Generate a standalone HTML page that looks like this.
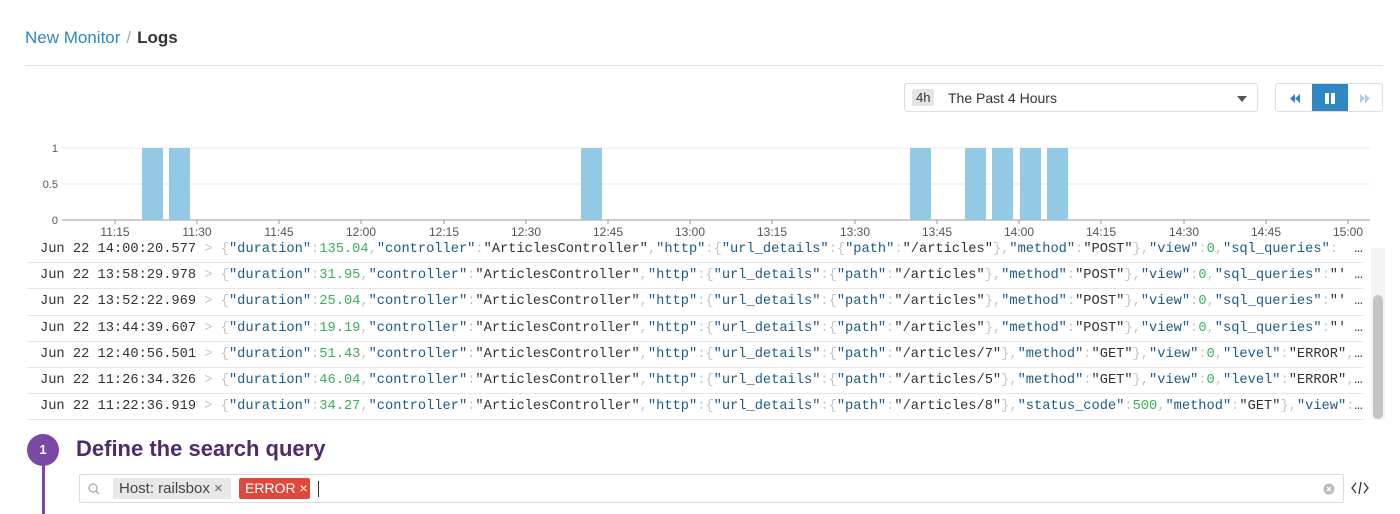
<!DOCTYPE html>
<html><head><meta charset="utf-8"><style>
*{margin:0;padding:0;box-sizing:border-box}
body{width:1400px;height:508px;overflow:hidden;background:#fff;font-family:"Liberation Sans",sans-serif;position:relative}
.bc{position:absolute;left:25px;top:28px;font-size:17px;color:#333}
.bc a{color:#2f87c4;text-decoration:none}
.bc .sl{color:#aaa;margin:0 6px}
.bc b{color:#333}
.hr{position:absolute;left:25px;right:17px;top:65px;border-top:1px solid #e3e3e3}
.sel{position:absolute;left:904px;top:83px;width:354px;height:29px;border:1px solid #ddd;border-radius:3px;font-size:14px;color:#333}
.sel .t{position:absolute;left:7px;top:5px;background:#e4e4e4;padding:1px 4px;border-radius:2px;font-size:13px}
.sel .l{position:absolute;left:43px;top:6px}
.sel .c{position:absolute;right:10px;top:12px;border-left:5px solid transparent;border-right:5px solid transparent;border-top:6px solid #555}
.btns{position:absolute;left:1275px;top:83px;width:108px;height:29px;border:1px solid #ddd;border-radius:3px;overflow:hidden}
.btns div{position:absolute;top:0;height:29px;width:36px}
.log{position:absolute;left:27px;top:240px;width:1340px;height:180px;overflow:hidden;font-family:"Liberation Mono",monospace;font-size:13.7px}
.in{margin-top:-3px}
.row{height:26.2px;line-height:26px;border-bottom:1px solid #e6e6e6;padding-left:13px;white-space:nowrap;overflow:hidden;text-overflow:ellipsis;width:1336px;color:#333}
.k{color:#1e5b86}.n{color:#3bb05a}.p{color:#c4c4c4}.s{color:#333}
.sb{position:absolute;left:1373px;top:295px;width:10px;height:124px;background:#c4c4c4;border-radius:5px}
.sbt{position:absolute;left:1371px;top:248px;width:14px;height:172px;background:#f4f4f4}
.step{position:absolute;left:27px;top:434px;width:32px;height:32px;border-radius:50%;background:#7a49a5;color:#fff;font-weight:bold;font-size:13px;text-align:center;line-height:32px}
.vl{position:absolute;left:42px;top:464px;width:3px;height:50px;background:#7a49a5}
.h{position:absolute;left:76px;top:436px;font-size:22px;font-weight:bold;color:#4e2a6e}
.q{position:absolute;left:79px;top:474px;width:1265px;height:29px;border:1px solid #ddd;border-radius:2px;font-size:15px}
.tag{position:absolute;top:3px;height:21px;line-height:21px;padding:0 6px;border-radius:2px;white-space:nowrap}
</style></head><body>
<div class="bc"><a>New Monitor</a><span class="sl">/</span><b>Logs</b></div>
<div class="hr"></div>
<div class="sel"><span class="t">4h</span><span class="l">The Past 4 Hours</span><span class="c"></span></div>
<div class="btns">
<div style="left:0"><svg width="36" height="29"><path d="M19 10l-5 4.5 5 4.5zM24 10l-5 4.5 5 4.5z" fill="#2f87c4"/></svg></div>
<div style="left:36px;background:#2f87c4"><svg width="36" height="29"><rect x="13" y="9" width="4" height="11" fill="#fff"/><rect x="19" y="9" width="4" height="11" fill="#fff"/></svg></div>
<div style="left:72px"><svg width="36" height="29"><path d="M12 10l5 4.5-5 4.5zM17 10l5 4.5-5 4.5z" fill="#a9d0ec"/></svg></div>
</div>
<div class="sbt"></div><div class="sb"></div>
<div class="log"><div class="in">
<div class="row">Jun 22 14:00:20.577 <span class="p">&gt; {</span><span class="k">"duration"</span><span class="p">:</span><span class="n">135.04</span><span class="p">,</span><span class="k">"controller"</span><span class="p">:</span>"ArticlesController"<span class="p">,</span><span class="k">"http"</span><span class="p">:{</span><span class="k">"url_details"</span><span class="p">:{</span><span class="k">"path"</span><span class="p">:</span>"/articles"<span class="p">},</span><span class="k">"method"</span><span class="p">:</span>"POST"<span class="p">},</span><span class="k">"view"</span><span class="p">:</span><span class="n">0</span><span class="p">,</span><span class="k">"sql_queries"</span><span class="p">:</span> &nbsp; &nbsp;…</div>
<div class="row">Jun 22 13:58:29.978 <span class="p">&gt; {</span><span class="k">"duration"</span><span class="p">:</span><span class="n">31.95</span><span class="p">,</span><span class="k">"controller"</span><span class="p">:</span>"ArticlesController"<span class="p">,</span><span class="k">"http"</span><span class="p">:{</span><span class="k">"url_details"</span><span class="p">:{</span><span class="k">"path"</span><span class="p">:</span>"/articles"<span class="p">},</span><span class="k">"method"</span><span class="p">:</span>"POST"<span class="p">},</span><span class="k">"view"</span><span class="p">:</span><span class="n">0</span><span class="p">,</span><span class="k">"sql_queries"</span><span class="p">:</span>"' (…</div>
<div class="row">Jun 22 13:52:22.969 <span class="p">&gt; {</span><span class="k">"duration"</span><span class="p">:</span><span class="n">25.04</span><span class="p">,</span><span class="k">"controller"</span><span class="p">:</span>"ArticlesController"<span class="p">,</span><span class="k">"http"</span><span class="p">:{</span><span class="k">"url_details"</span><span class="p">:{</span><span class="k">"path"</span><span class="p">:</span>"/articles"<span class="p">},</span><span class="k">"method"</span><span class="p">:</span>"POST"<span class="p">},</span><span class="k">"view"</span><span class="p">:</span><span class="n">0</span><span class="p">,</span><span class="k">"sql_queries"</span><span class="p">:</span>"' (…</div>
<div class="row">Jun 22 13:44:39.607 <span class="p">&gt; {</span><span class="k">"duration"</span><span class="p">:</span><span class="n">19.19</span><span class="p">,</span><span class="k">"controller"</span><span class="p">:</span>"ArticlesController"<span class="p">,</span><span class="k">"http"</span><span class="p">:{</span><span class="k">"url_details"</span><span class="p">:{</span><span class="k">"path"</span><span class="p">:</span>"/articles"<span class="p">},</span><span class="k">"method"</span><span class="p">:</span>"POST"<span class="p">},</span><span class="k">"view"</span><span class="p">:</span><span class="n">0</span><span class="p">,</span><span class="k">"sql_queries"</span><span class="p">:</span>"' (…</div>
<div class="row">Jun 22 12:40:56.501 <span class="p">&gt; {</span><span class="k">"duration"</span><span class="p">:</span><span class="n">51.43</span><span class="p">,</span><span class="k">"controller"</span><span class="p">:</span>"ArticlesController"<span class="p">,</span><span class="k">"http"</span><span class="p">:{</span><span class="k">"url_details"</span><span class="p">:{</span><span class="k">"path"</span><span class="p">:</span>"/articles/7"<span class="p">},</span><span class="k">"method"</span><span class="p">:</span>"GET"<span class="p">},</span><span class="k">"view"</span><span class="p">:</span><span class="n">0</span><span class="p">,</span><span class="k">"level"</span><span class="p">:</span>"ERROR"<span class="p">,</span>"…</div>
<div class="row">Jun 22 11:26:34.326 <span class="p">&gt; {</span><span class="k">"duration"</span><span class="p">:</span><span class="n">46.04</span><span class="p">,</span><span class="k">"controller"</span><span class="p">:</span>"ArticlesController"<span class="p">,</span><span class="k">"http"</span><span class="p">:{</span><span class="k">"url_details"</span><span class="p">:{</span><span class="k">"path"</span><span class="p">:</span>"/articles/5"<span class="p">},</span><span class="k">"method"</span><span class="p">:</span>"GET"<span class="p">},</span><span class="k">"view"</span><span class="p">:</span><span class="n">0</span><span class="p">,</span><span class="k">"level"</span><span class="p">:</span>"ERROR"<span class="p">,</span>"…</div>
<div class="row">Jun 22 11:22:36.919 <span class="p">&gt; {</span><span class="k">"duration"</span><span class="p">:</span><span class="n">34.27</span><span class="p">,</span><span class="k">"controller"</span><span class="p">:</span>"ArticlesController"<span class="p">,</span><span class="k">"http"</span><span class="p">:{</span><span class="k">"url_details"</span><span class="p">:{</span><span class="k">"path"</span><span class="p">:</span>"/articles/8"<span class="p">},</span><span class="k">"status_code"</span><span class="p">:</span><span class="n">500</span><span class="p">,</span><span class="k">"method"</span><span class="p">:</span>"GET"<span class="p">},</span><span class="k">"view"</span><span class="p">:</span><span class="n">0…</span></div>
</div></div>
<svg style="position:absolute;left:0;top:130px" width="1400" height="110" font-family="Liberation Sans" font-size="12" fill="#555">
<line x1="62" x2="1370" y1="18" y2="18" stroke="#e8e8e8"/>
<line x1="62" x2="1370" y1="54" y2="54" stroke="#e8e8e8"/>
<line x1="62" x2="1370" y1="90" y2="90" stroke="#999"/>
<text x="58" y="22" text-anchor="end" font-size="11">1</text><text x="58" y="58" text-anchor="end" font-size="11">0.5</text><text x="58" y="94" text-anchor="end" font-size="11">0</text>
<g fill="#93c9e4">
<rect x="142" y="18" width="21" height="72"/><rect x="169" y="18" width="21" height="72"/><rect x="581" y="18" width="21" height="72"/><rect x="910" y="18" width="21" height="72"/><rect x="965" y="18" width="21" height="72"/><rect x="992" y="18" width="21" height="72"/><rect x="1020" y="18" width="21" height="72"/><rect x="1047" y="18" width="21" height="72"/>
</g>
<g stroke="#999">
<line x1="115" x2="115" y1="90" y2="94"/><line x1="197" x2="197" y1="90" y2="94"/><line x1="279" x2="279" y1="90" y2="94"/><line x1="361" x2="361" y1="90" y2="94"/><line x1="444" x2="444" y1="90" y2="94"/><line x1="526" x2="526" y1="90" y2="94"/><line x1="608" x2="608" y1="90" y2="94"/><line x1="690" x2="690" y1="90" y2="94"/><line x1="772" x2="772" y1="90" y2="94"/><line x1="855" x2="855" y1="90" y2="94"/><line x1="937" x2="937" y1="90" y2="94"/><line x1="1019" x2="1019" y1="90" y2="94"/><line x1="1101" x2="1101" y1="90" y2="94"/><line x1="1184" x2="1184" y1="90" y2="94"/><line x1="1266" x2="1266" y1="90" y2="94"/><line x1="1348" x2="1348" y1="90" y2="94"/>
</g>
<g text-anchor="middle">
<text x="115" y="106">11:15</text><text x="197" y="106">11:30</text><text x="279" y="106">11:45</text><text x="361" y="106">12:00</text><text x="444" y="106">12:15</text><text x="526" y="106">12:30</text><text x="608" y="106">12:45</text><text x="690" y="106">13:00</text><text x="772" y="106">13:15</text><text x="855" y="106">13:30</text><text x="937" y="106">13:45</text><text x="1019" y="106">14:00</text><text x="1101" y="106">14:15</text><text x="1184" y="106">14:30</text><text x="1266" y="106">14:45</text><text x="1348" y="106">15:00</text>
</g>
</svg>
<div class="step">1</div><div class="vl"></div>
<div class="h">Define the search query</div>
<div class="q">
<svg style="position:absolute;left:8px;top:8px" width="12" height="12"><circle cx="5" cy="5" r="4" fill="none" stroke="#aaa" stroke-width="1.3"/><line x1="8" y1="8" x2="11" y2="11" stroke="#aaa" stroke-width="1.5"/></svg>
<span class="tag" style="left:33px;width:118px;background:#e8e8e8;color:#444">Host: railsbox <span style="color:#666">×</span></span>
<span class="tag" style="left:159px;width:71px;background:#e0483e;color:#fff;font-size:14px">ERROR ×</span>
<span style="position:absolute;left:238px;top:6px;width:1px;height:16px;background:#333"></span>
<svg style="position:absolute;right:8px;top:8px" width="12" height="12"><circle cx="6" cy="6" r="5.5" fill="#bbb"/><path d="M4 4l4 4M8 4l-4 4" stroke="#fff" stroke-width="1.4"/></svg>
</div>
<svg style="position:absolute;left:1350px;top:480px" width="20" height="16"><path d="M6 3L2 8l4 5M14 3l4 5-4 5M11 2L9 14" fill="none" stroke="#333" stroke-width="1.3"/></svg>
</body></html>
